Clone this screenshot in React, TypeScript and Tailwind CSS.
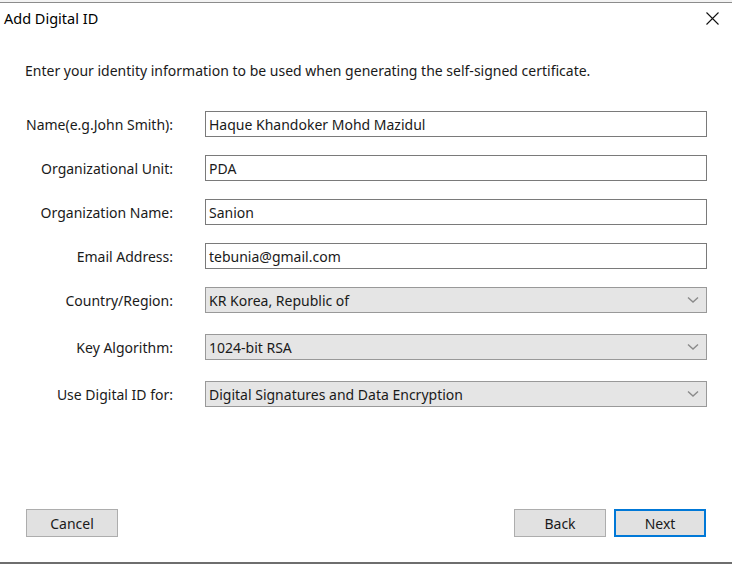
import React from 'react';

const font = { fontFamily: '"Noto Sans", "Open Sans", sans-serif' };

function Chevron() {
  return (
    <svg width="12" height="8" viewBox="0 0 12 8" className="shrink-0">
      <path d="M1 1.5 L6 6 L11 1.5" fill="none" stroke="#8a8a8a" strokeWidth="1.4" />
    </svg>
  );
}

function TextRow({ label, value }: { label: string; value: string }) {
  return (
    <div className="flex items-center h-[26px]">
      <div className="w-[174px] text-right pr-px">{label}</div>
      <div className="ml-[31px] w-[502px] h-[26px] border border-[#7a7a7a] bg-white flex items-center pl-[3px]">
        {value}
      </div>
    </div>
  );
}

function SelectRow({ label, value }: { label: string; value: string }) {
  return (
    <div className="flex items-center h-[26px]">
      <div className="w-[174px] text-right pr-px">{label}</div>
      <div className="ml-[31px] w-[502px] h-[26px] border border-[#999999] bg-[#e5e5e5] flex items-center justify-between pl-[3px] pr-[7px]">
        <span>{value}</span>
        <Chevron />
      </div>
    </div>
  );
}

function Button({ label, primary }: { label: string; primary?: boolean }) {
  return (
    <button
      className={
        'w-[92px] h-[28px] bg-[#e1e1e1] flex items-center justify-center ' +
        (primary ? 'border-2 border-[#0078d7]' : 'border border-[#adadad]')
      }
    >
      {label}
    </button>
  );
}

export default function App() {
  return (
    <div className="w-[732px] h-[564px] bg-white text-[#1a1a1a] text-[14px] flex flex-col" style={font}>
      <div className="h-[2px] bg-[#f3f3f3]" />
      <div className="h-px bg-[#8c8c8c]" />
      <div className="flex items-center justify-between h-[31px] pl-[4px] pr-[13px]">
        <span className="text-[14.5px] text-black">Add Digital ID</span>
        <svg width="13" height="13" viewBox="0 0 13 13">
          <path d="M0.5 0.5 L12.5 12.5 M12.5 0.5 L0.5 12.5" stroke="#111" strokeWidth="1.1" />
        </svg>
      </div>
      <div className="pl-[25px] mt-[24px] h-[24px] flex items-center">
        Enter your identity information to be used when generating the self-signed certificate.
      </div>
      <div className="mt-[29px] flex flex-col">
        <div className="flex flex-col gap-[18px]">
          <TextRow label="Name(e.g.John Smith):" value="Haque Khandoker Mohd Mazidul" />
          <TextRow label="Organizational Unit:" value="PDA" />
          <TextRow label="Organization Name:" value="Sanion" />
          <TextRow label="Email Address:" value="tebunia@gmail.com" />
        </div>
        <div className="mt-[18px] flex flex-col gap-[21px]">
          <SelectRow label="Country/Region:" value="KR Korea, Republic of" />
          <SelectRow label="Key Algorithm:" value="1024-bit RSA" />
          <SelectRow label="Use Digital ID for:" value="Digital Signatures and Data Encryption" />
        </div>
      </div>
      <div className="mt-auto flex items-center pl-[26px] pr-[26px]">
        <Button label="Cancel" />
        <div className="ml-auto flex gap-[8px]">
          <Button label="Back" />
          <Button label="Next" primary />
        </div>
      </div>
      <div className="h-[25px]" />
      <div className="h-[2px] bg-[#6e6e6e]" />
    </div>
  );
}
